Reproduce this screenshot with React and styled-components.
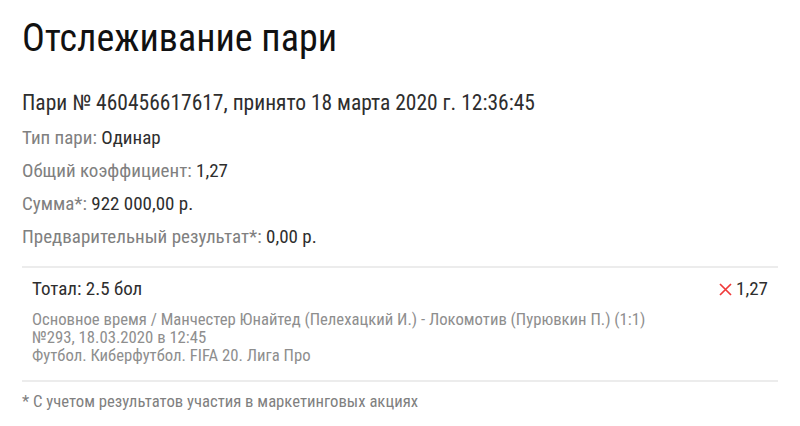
import React from 'react';
import styled, { createGlobalStyle } from 'styled-components';

const GlobalStyle = createGlobalStyle`
  body {
    margin: 0;
    background: #fff;
    font-family: "Roboto Condensed", Roboto, "Liberation Sans Narrow", sans-serif;
    font-stretch: condensed;
    color: #222;
  }
`;

const Page = styled.div`
  width: 800px;
  height: 426px;
  box-sizing: border-box;
  padding: 14px 22px 0 22px;
`;

const Title = styled.h1`
  margin: 0;
  font-weight: 400;
  font-size: 38px;
  line-height: 48px;
  color: #111;
`;

const BetHeader = styled.div`
  margin-top: 29px;
  font-size: 21.5px;
  line-height: 24px;
  color: #2e2e2e;
`;

const InfoList = styled.div`
  margin-top: 12px;
  display: flex;
  flex-direction: column;
  gap: 11px;
`;

const InfoRow = styled.div`
  font-size: 19px;
  line-height: 22px;
  color: #808080;

  b {
    font-weight: 400;
    color: #2e2e2e;
  }
`;

const Event = styled.div`
  margin-top: 18px;
  border-top: 2px solid #ececec;
  border-bottom: 2px solid #ececec;
  padding: 9px 10px 15px 10px;
`;

const EventHead = styled.div`
  display: flex;
  justify-content: space-between;
  align-items: center;
  font-size: 19px;
  line-height: 24px;
  color: #2e2e2e;
`;

const Odds = styled.span`
  display: flex;
  align-items: center;
  gap: 4px;
`;

const Cross = styled.svg`
  width: 13px;
  height: 13px;
`;

const Details = styled.div`
  margin-top: 10px;
  font-size: 16.7px;
  line-height: 18px;
  color: #8e8e8e;
`;

const Footnote = styled.div`
  margin-top: 11px;
  font-size: 16.7px;
  line-height: 18px;
  color: #808080;
`;

const info = [
  ['Тип пари:', 'Одинар'],
  ['Общий коэффициент:', '1,27'],
  ['Сумма*:', '922 000,00 р.'],
  ['Предварительный результат*:', '0,00 р.'],
];

export default function App() {
  return (
    <Page>
      <GlobalStyle />
      <Title>Отслеживание пари</Title>
      <BetHeader>Пари № 460456617617, принято 18 марта 2020 г. 12:36:45</BetHeader>
      <InfoList>
        {info.map(([label, value]) => (
          <InfoRow key={label}>
            {label} <b>{value}</b>
          </InfoRow>
        ))}
      </InfoList>
      <Event>
        <EventHead>
          <span>Тотал: 2.5 бол</span>
          <Odds>
            <Cross viewBox="0 0 13 13">
              <path d="M1 1 L12 12 M12 1 L1 12" stroke="#f03a3a" strokeWidth="1.7" />
            </Cross>
            1,27
          </Odds>
        </EventHead>
        <Details>
          <div>Основное время / Манчестер Юнайтед (Пелехацкий И.) - Локомотив (Пурювкин П.) (1:1)</div>
          <div>№293, 18.03.2020 в 12:45</div>
          <div>Футбол. Киберфутбол. FIFA 20. Лига Про</div>
        </Details>
      </Event>
      <Footnote>* С учетом результатов участия в маркетинговых акциях</Footnote>
    </Page>
  );
}
